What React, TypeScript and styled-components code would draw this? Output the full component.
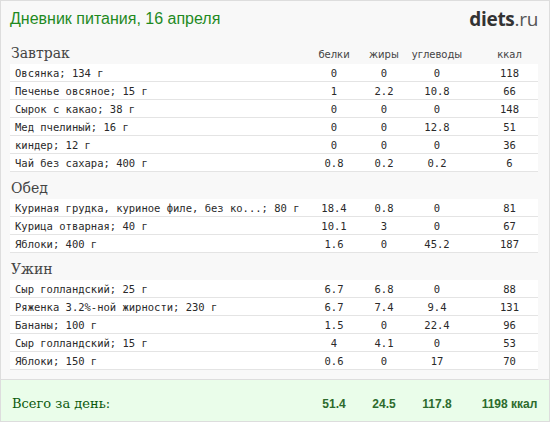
import styled, { createGlobalStyle } from "styled-components";

const GlobalStyle = createGlobalStyle`
  html, body {
    margin: 0;
    padding: 0;
    background: #ffffff;
  }
`;

type Item = { name: string; p: string; f: string; c: string; kcal: string };
type Meal = { title: string; items: Item[] };

const meals: Meal[] = [
  {
    title: "Завтрак",
    items: [
      { name: "Овсянка; 134 г", p: "0", f: "0", c: "0", kcal: "118" },
      { name: "Печенье овсяное; 15 г", p: "1", f: "2.2", c: "10.8", kcal: "66" },
      { name: "Сырок с какао; 38 г", p: "0", f: "0", c: "0", kcal: "148" },
      { name: "Мед пчелиный; 16 г", p: "0", f: "0", c: "12.8", kcal: "51" },
      { name: "киндер; 12 г", p: "0", f: "0", c: "0", kcal: "36" },
      { name: "Чай без сахара; 400 г", p: "0.8", f: "0.2", c: "0.2", kcal: "6" },
    ],
  },
  {
    title: "Обед",
    items: [
      { name: "Куриная грудка, куриное филе, без ко...; 80 г", p: "18.4", f: "0.8", c: "0", kcal: "81" },
      { name: "Курица отварная; 40 г", p: "10.1", f: "3", c: "0", kcal: "67" },
      { name: "Яблоки; 400 г", p: "1.6", f: "0", c: "45.2", kcal: "187" },
    ],
  },
  {
    title: "Ужин",
    items: [
      { name: "Сыр голландский; 25 г", p: "6.7", f: "6.8", c: "0", kcal: "88" },
      { name: "Ряженка 3.2%-ной жирности; 230 г", p: "6.7", f: "7.4", c: "9.4", kcal: "131" },
      { name: "Бананы; 100 г", p: "1.5", f: "0", c: "22.4", kcal: "96" },
      { name: "Сыр голландский; 15 г", p: "4", f: "4.1", c: "0", kcal: "53" },
      { name: "Яблоки; 150 г", p: "0.6", f: "0", c: "17", kcal: "70" },
    ],
  },
];

const Page = styled.div`
  box-sizing: border-box;
  width: 550px;
  height: 422px;
  border: 1px solid #dddddd;
  background: #f8f8f8;
  display: flex;
  flex-direction: column;
`;

const Content = styled.div`
  flex: 1;
  padding: 0 11px 0 9px;
`;

const Header = styled.div`
  height: 36px;
  display: flex;
  align-items: center;
  justify-content: space-between;
`;

const Title = styled.h1`
  margin: 0;
  font-family: "Liberation Sans", Arial, sans-serif;
  font-weight: normal;
  font-size: 16px;
  color: #1f8a1f;
`;

const Logo = styled.div`
  font-family: "Open Sans", Roboto, sans-serif;
  font-size: 19px;
  color: #333333;
  letter-spacing: -0.3px;
  b {
    font-weight: 700;
  }
  span {
    font-weight: 400;
    color: #555555;
  }
`;

const Grid = styled.div`
  display: grid;
  grid-template-columns: 1fr 50px 50px 56px 73px;
  align-items: end;
`;

const SectionHead = styled(Grid)`
  height: 27px;
  padding-bottom: 3px;
  box-sizing: border-box;
`;

const SectionTitle = styled.div`
  font-family: "DejaVu Serif", "Liberation Serif", serif;
  font-size: 14px;
  color: #444444;
  padding-left: 1px;
`;

const ColHead = styled.div<{ $last?: boolean }>`
  font-family: "DejaVu Sans", Verdana, sans-serif;
  font-size: 10px;
  color: #444444;
  text-align: center;
  padding-left: ${(p) => (p.$last ? "16px" : "0")};
  padding-bottom: 1px;
`;

const Row = styled(Grid)`
  height: 17px;
  align-items: center;
  background: #ffffff;
  border-bottom: 1px solid #e4e4e4;
  font-family: "DejaVu Sans Mono", monospace;
  font-size: 10.5px;
  color: #2a2a2a;
`;

const Name = styled.div`
  padding-left: 5px;
  white-space: nowrap;
`;

const Cell = styled.div<{ $last?: boolean }>`
  text-align: center;
  padding-left: ${(p) => (p.$last ? "16px" : "0")};
`;

const Footer = styled(Grid)`
  height: 42px;
  box-sizing: border-box;
  border-top: 1px solid #dddddd;
  background: #eafdea;
  padding: 0 11px 10px 11px;
`;

const Total = styled.div`
  font-family: "DejaVu Serif", "Liberation Serif", serif;
  font-size: 13px;
  color: #0c5a0c;
`;

const TotalNum = styled.div<{ $last?: boolean }>`
  font-family: "Liberation Sans", Arial, sans-serif;
  font-weight: bold;
  font-size: 12px;
  color: #2d6b2d;
  text-align: center;
  padding-left: ${(p) => (p.$last ? "16px" : "0")};
`;

export default function App() {
  return (
    <>
      <GlobalStyle />
      <Page>
        <Content>
          <Header>
            <Title>Дневник питания, 16 апреля</Title>
            <Logo>
              <b>diets</b>
              <span>.ru</span>
            </Logo>
          </Header>
          {meals.map((meal, i) => (
            <div key={meal.title}>
              <SectionHead>
                <SectionTitle>{meal.title}</SectionTitle>
                {i === 0 && (
                  <>
                    <ColHead>белки</ColHead>
                    <ColHead>жиры</ColHead>
                    <ColHead>углеводы</ColHead>
                    <ColHead $last>ккал</ColHead>
                  </>
                )}
              </SectionHead>
              {meal.items.map((it, j) => (
                <Row key={j}>
                  <Name>{it.name}</Name>
                  <Cell>{it.p}</Cell>
                  <Cell>{it.f}</Cell>
                  <Cell>{it.c}</Cell>
                  <Cell $last>{it.kcal}</Cell>
                </Row>
              ))}
            </div>
          ))}
        </Content>
        <Footer>
          <Total>Всего за день:</Total>
          <TotalNum>51.4</TotalNum>
          <TotalNum>24.5</TotalNum>
          <TotalNum>117.8</TotalNum>
          <TotalNum $last>1198 ккал</TotalNum>
        </Footer>
      </Page>
    </>
  );
}
